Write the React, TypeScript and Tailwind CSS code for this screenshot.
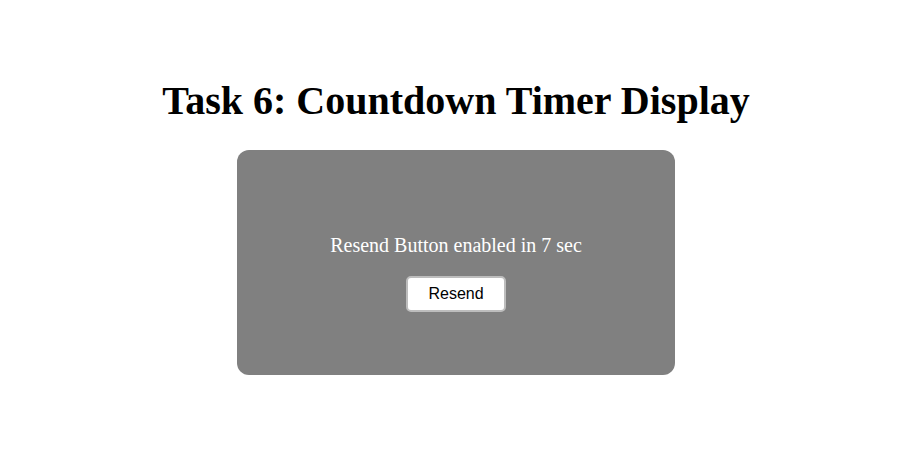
export default function App() {
  return (
    <div className="flex min-h-screen flex-col items-center bg-white pr-[3px] pt-[77px] font-['Liberation_Serif',serif]">
      <h1 className="text-[40px] font-bold leading-[48px] text-black">
        Task 6: Countdown Timer Display
      </h1>
      <div className="mt-[25px] flex h-[225px] w-[438px] flex-col items-center justify-center rounded-[12px] bg-[#808080] pt-[20px]">
        <p className="text-[20px] leading-[24px] text-white">
          Resend Button enabled in 7 sec
        </p>
        <button
          type="button"
          className="mt-[19px] h-[36px] w-[100px] rounded-[5px] border-2 border-[#bdbdbd] bg-white font-['Liberation_Sans',Arial,sans-serif] text-[16px] text-black"
        >
          Resend
        </button>
      </div>
    </div>
  );
}
